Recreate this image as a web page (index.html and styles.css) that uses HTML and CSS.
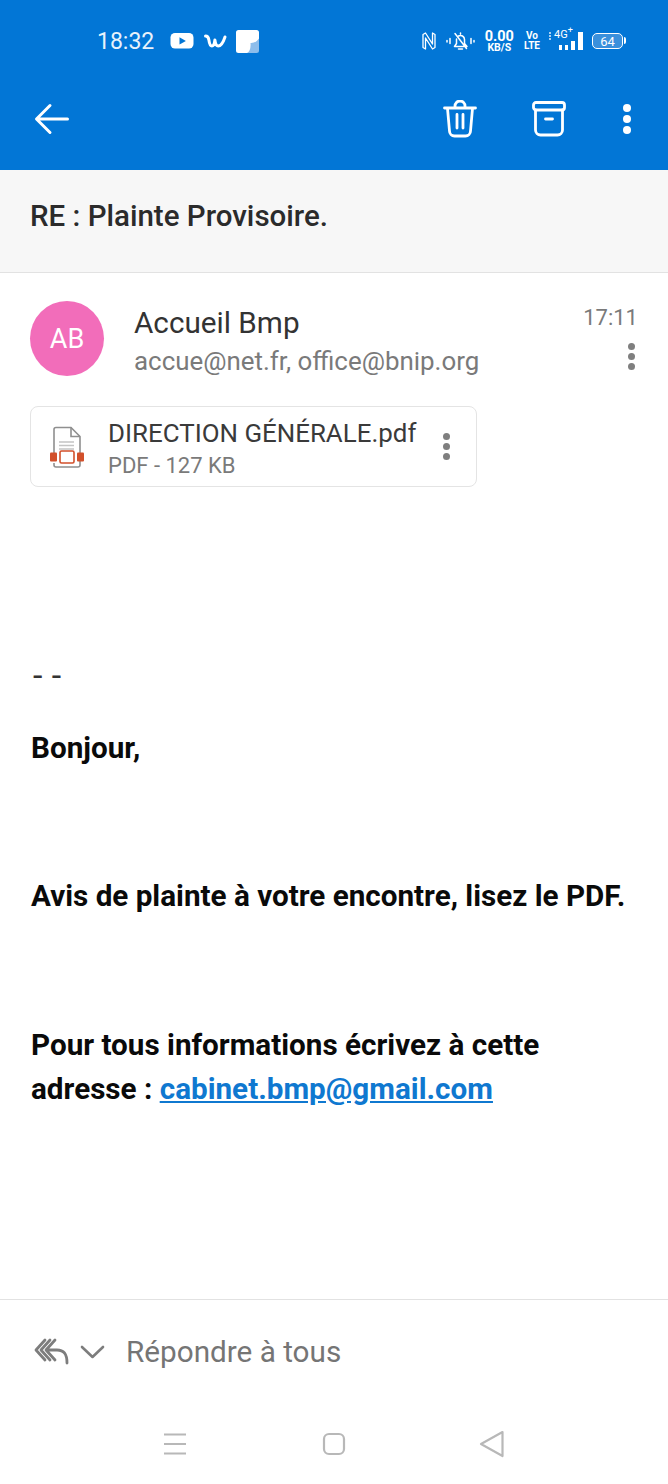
FILE: index.html
```html
<!DOCTYPE html>
<html>
    <head>
        <meta charset="utf-8">
        <link rel="stylesheet" href="styles.css">
    </head>

    <body>
        <div class="wrapper">
            <div class="top">
                <div class="status">
                    <span class="time">18:32</span>
                    <svg class="st-yt" width="24" height="16" viewBox="0 0 24 16"><rect width="23" height="15.500" x="0.500" rx="4.500" fill="#fff"/><path d="M9.500 4.200v7.400l6.400-3.700z" fill="#0276d6"/></svg>
                    <svg class="st-wish" width="24" height="16" viewBox="0 0 24 16"><path d="M1.500 3c2 0 3 1 3.400 4 .4 3 1.200 6 3 6 2 0 2.600-3 3-6 .4 3 1.200 6 3.300 6 3 0 5-3.500 6.800-9" fill="none" stroke="#fff" stroke-width="3" stroke-linecap="round" stroke-linejoin="round"/></svg>
                    <svg class="st-note" width="23" height="23" viewBox="0 0 23 23"><path d="M2.500 0H20.500A2.500 2.500 0 0 1 23 2.500V13L13 23H2.500A2.500 2.500 0 0 1 0 20.500V2.500A2.500 2.500 0 0 1 2.500 0z" fill="#fff"/><path d="M23 8.500v12a2.500 2.500 0 0 1-2.500 2.500H11c2.500-1 4-4.500 3.500-10 3.500.3 6.500-1.500 8.500-4.500z" fill="#8dbdeb"/></svg>

                    <div class="status-right">
                        <svg class="st-nfc" width="16" height="20" viewBox="0 0 16 20" fill="none" stroke="#fff" stroke-width="1.300" stroke-linejoin="round" stroke-linecap="round"><path d="M4.500 2 2 3.500v13L4.500 18V7l7 11 2.500-1.500v-13L11.500 2v11z"/></svg>
                        <svg class="st-bell" width="29" height="20" viewBox="0 0 29 20" fill="none" stroke="#fff" stroke-width="1.500" stroke-linecap="round" stroke-linejoin="round"><path d="M8.500 15.500h12.500l-2.500-3V8.500a4 4 0 0 0-6-3.500M10.500 8v4.500l-2 3M12.500 18h4M14.500 2v1M9 2.500l11.500 15"/><path d="M1 9.500v1.500M4 7.500v5M25 7.500v5M28 9.500v1.500"/></svg>
                        <div class="st-speed"><b>0.00</b><b class="unit">KB/S</b></div>
                        <div class="st-volte"><b>Vo</b><b>LTE</b></div>
                        <div class="st-signal">
                            <span class="net">4G<sup>+</sup></span>
                            <i class="b1"></i><i class="b2"></i><i class="b3"></i><i class="b4"></i>
                        </div>
                        <div class="st-batt"><span>64</span></div>
                    </div>
                </div>

                <div class="appbar">
                    <svg width="36" height="32" viewBox="0 0 36 32" fill="none" stroke="#fff" stroke-width="3" stroke-linecap="round" stroke-linejoin="round"><path d="M33.500 16H3M16 2.500 2.500 16 16 29.500"/></svg>
                    <div class="appbar-actions">
                        <svg width="34" height="38" viewBox="0 0 34 38" fill="none" stroke="#fff" stroke-width="2.800" stroke-linecap="round" stroke-linejoin="round"><path d="M1.500 8h31M4.500 8.500l2 22.500a5 5 0 0 0 5 5h11a5 5 0 0 0 5-5l2-22.500M12 7.500V6a5 5 0 0 1 10 0v1.500M14 14.500v13.500M20 14.500v13.500"/></svg>
                        <svg width="34" height="36" viewBox="0 0 34 36" fill="none" stroke="#fff" stroke-width="2.800" stroke-linecap="round" stroke-linejoin="round"><rect x="1.500" y="1.500" width="31" height="7.500" rx="2.500"/><path d="M3.500 9v20a5 5 0 0 0 5 5h17a5 5 0 0 0 5-5V9M13.500 18h7"/></svg>
                        <div class="dots dots-white"><i></i><i></i><i></i></div>
                    </div>
                </div>
            </div>

            <div class="subject">RE : Plainte Provisoire.</div>

            <div class="message">
                <div class="head">
                    <div class="avatar">AB</div>
                    <div class="sender">
                        <div class="name">Accueil Bmp</div>
                        <div class="addr">accue@net.fr, office@bnip.org</div>
                    </div>
                    <div class="meta">
                        <div class="hour">17:11</div>
                        <div class="dots dots-grey"><i></i><i></i><i></i></div>
                    </div>
                </div>

                <div class="attach">
                    <svg width="36" height="44" viewBox="0 0 36 44" fill="none"><path d="M5 34V4.500a2 2 0 0 1 2-2h15l9 9V40a2 2 0 0 1-2 2H7a2 2 0 0 1-2-2v-2" stroke="#8f8f8f" stroke-width="1.600"/><path d="M22 2.500V11.500h9" stroke="#8f8f8f" stroke-width="1.600"/><path d="M10 17h15M10 20.500h15M10 24h15" stroke="#c4c4c4" stroke-width="1.300"/><rect x="11" y="26" width="14" height="12" rx="1.500" fill="#fff" stroke="#d2502b" stroke-width="1.600"/><rect x="1" y="27.500" width="7" height="9" rx="1" fill="#d2502b"/><rect x="28" y="27.500" width="7" height="9" rx="1" fill="#d2502b"/></svg>
                    <div class="attach-text">
                        <div class="attach-name">DIRECTION GÉNÉRALE.pdf</div>
                        <div class="attach-size">PDF - 127 KB</div>
                    </div>
                    <div class="dots dots-grey"><i></i><i></i><i></i></div>
                </div>

                <div class="mail">
                    <p class="sig">- -</p>
                    <p class="gap1">Bonjour,</p>
                    <p class="gap2">Avis de plainte à votre encontre, lisez le PDF.</p>
                    <p class="gap2">Pour tous informations écrivez à cette adresse : <a href="#">cabinet.bmp@gmail.com</a></p>
                </div>
            </div>

            <div class="reply">
                <svg width="72" height="32" viewBox="0 0 72 32" fill="none" stroke="#7d7d7d" stroke-width="2.800" stroke-linecap="round" stroke-linejoin="round"><path d="M12 4 3 14l9 10M17 4 8 14l9 10M22 4 13 14l9 10M13 14h11c7 0 10 4 10 13"/><path d="M49 11l10.500 10L70 11" stroke-width="2.600"/></svg>
                <span>Répondre à tous</span>
            </div>

            <div class="navbar">
                <svg width="24" height="24" viewBox="0 0 24 24" stroke="#b8b8b8" stroke-width="2.200"><path d="M1 2.500h22M1 12h22M1 21.500h22"/></svg>
                <svg width="24" height="24" viewBox="0 0 24 24" fill="none" stroke="#b8b8b8" stroke-width="2.200"><rect x="2" y="2" width="20" height="20" rx="5"/></svg>
                <svg class="nav-back" width="26" height="28" viewBox="0 0 26 28" fill="none" stroke="#b8b8b8" stroke-width="2.200" stroke-linejoin="round"><path d="M23.500 2 2 14l21.500 12z"/></svg>
            </div>
        </div>
    </body>
</html>
```

FILE: styles.css
```css
* {
    box-sizing: border-box;
}

body {
    margin: 0;
    padding: 0;
    background-color: #fff;
    font-family: Roboto, "Liberation Sans", sans-serif;
}

.wrapper {
    width: 668px;
    height: 1484px;
    display: flex;
    flex-direction: column;
    overflow: hidden;
}

.top {
    height: 170px;
    background-color: #0276d6;
    color: #fff;
}

.status {
    height: 82px;
    padding-left: 97px;
    display: flex;
    align-items: center;
}

.time {
    font-size: 23px;
    width: 73px;
    color: #e8f2fb;
}

.st-yt {
    margin-right: 10px;
}

.st-wish {
    margin-right: 8px;
}

.status-right {
    margin-left: auto;
    margin-right: 45px;
    display: flex;
    align-items: center;
}

.st-nfc {
    margin-right: 9px;
}

.st-bell {
    margin-right: 10px;
}

.st-speed {
    display: flex;
    flex-direction: column;
    align-items: center;
    font-size: 14.500px;
    line-height: 13px;
    margin-right: 10px;
}

.st-speed .unit {
    font-size: 10.500px;
    line-height: 10px;
}

.st-volte {
    display: flex;
    flex-direction: column;
    align-items: center;
    font-size: 10px;
    line-height: 10px;
    margin-right: 9px;
}

.st-signal {
    position: relative;
    width: 34px;
    height: 18px;
    margin-right: 9px;
    display: flex;
    align-items: flex-end;
    justify-content: flex-end;
    gap: 3px;
}

.st-signal::before {
    content: "";
    position: absolute;
    left: 0;
    top: 0;
    height: 8px;
    border-left: 2px dotted #a9d0f1;
}

.st-signal .net {
    position: absolute;
    left: 5px;
    top: -3px;
    font-size: 11px;
    line-height: 12px;
}

.st-signal sup {
    font-size: 9px;
    line-height: 0;
}

.st-signal i {
    background-color: #fff;
}

.st-signal .b1 { width: 3px; height: 5px; }
.st-signal .b2 { width: 3px; height: 5px; }
.st-signal .b3 { width: 4px; height: 9px; }
.st-signal .b4 { width: 5px; height: 18px; }

.st-batt {
    position: relative;
    width: 31px;
    height: 16px;
    border: 1.500px solid #fff;
    border-radius: 5px;
    background-color: #3a90dc;
    display: flex;
    align-items: center;
    justify-content: center;
    font-size: 13px;
}

.st-batt::after {
    content: "";
    position: absolute;
    right: -4px;
    top: 3px;
    width: 2px;
    height: 7px;
    background-color: #fff;
    border-radius: 0 2px 2px 0;
}

.appbar {
    height: 88px;
    padding: 0 0 14px 34px;
    display: flex;
    align-items: center;
    justify-content: space-between;
}

.appbar-actions {
    display: flex;
    align-items: center;
    padding-right: 37px;
}

.appbar-actions svg {
    margin-right: 55px;
}

.appbar-actions svg + svg {
    margin-right: 57px;
}

.dots {
    display: flex;
    flex-direction: column;
    gap: 3px;
}

.dots i {
    display: block;
    width: 7px;
    height: 7px;
    border-radius: 50%;
}

.dots-white i {
    width: 8px;
    height: 8px;
    background-color: #fff;
}

.dots-grey i {
    background-color: #7f7f7f;
}

.subject {
    height: 103px;
    padding: 0 30px 10px;
    display: flex;
    align-items: center;
    background-color: #f7f7f7;
    border-bottom: 1px solid #e2e2e2;
    font-size: 29.500px;
    font-weight: 500;
    color: #2b2b2b;
}

.message {
    flex: 1;
    padding: 28px 30px 0;
}

.head {
    display: flex;
}

.avatar {
    width: 74px;
    height: 75px;
    border-radius: 50%;
    background-color: #f26dba;
    color: #fff;
    font-size: 27px;
    display: flex;
    align-items: center;
    justify-content: center;
    margin-right: 30px;
}

.sender {
    flex: 1;
}

.name {
    font-size: 29.700px;
    line-height: 40px;
    color: #333;
    margin-top: 2px;
}

.addr {
    font-size: 25.900px;
    line-height: 36px;
    color: #7a7a7a;
}

.meta {
    display: flex;
    flex-direction: column;
    align-items: flex-end;
}

.hour {
    font-size: 22px;
    line-height: 30px;
    color: #7a7a7a;
    margin: 2px 0 10px;
}

.meta .dots {
    margin-right: 3px;
}

.attach {
    width: 447px;
    height: 81px;
    margin-top: 27px;
    border: 1px solid #e4e4e4;
    border-radius: 8px;
    display: flex;
    align-items: center;
    padding-left: 18px;
}

.attach-text {
    flex: 1;
    margin-left: 23px;
    padding-top: 2px;
}

.attach-name {
    font-size: 25.900px;
    line-height: 36px;
    color: #3a3a3a;
}

.attach-size {
    font-size: 22px;
    line-height: 28px;
    margin-top: 1px;
    color: #7a7a7a;
}

.attach .dots {
    margin-right: 26px;
}

.mail {
    margin-top: 166px;
    padding-left: 1px;
    font-size: 29.650px;
    line-height: 44.500px;
    font-weight: 700;
    color: #0a0a0a;
}

.mail p {
    margin: 0;
}

.mail .sig {
    font-size: 34px;
    font-weight: 400;
    color: #333;
    letter-spacing: 0.5px;
    padding-left: 2px;
}

.mail .gap1 {
    margin-top: 28px;
}

.mail .gap2 {
    margin-top: 104px;
}

.mail a {
    color: #0f78d0;
}

.reply {
    height: 105px;
    border-top: 1px solid #e2e2e2;
    padding: 0 0 1px 33px;
    display: flex;
    align-items: center;
    font-size: 29.700px;
    color: #757575;
}

.reply span {
    margin-left: 21px;
}

.navbar {
    height: 80px;
    padding: 0 0 0 163px;
    display: flex;
    align-items: center;
    gap: 135px;
}

.nav-back {
    margin-left: -2px;
}
```
